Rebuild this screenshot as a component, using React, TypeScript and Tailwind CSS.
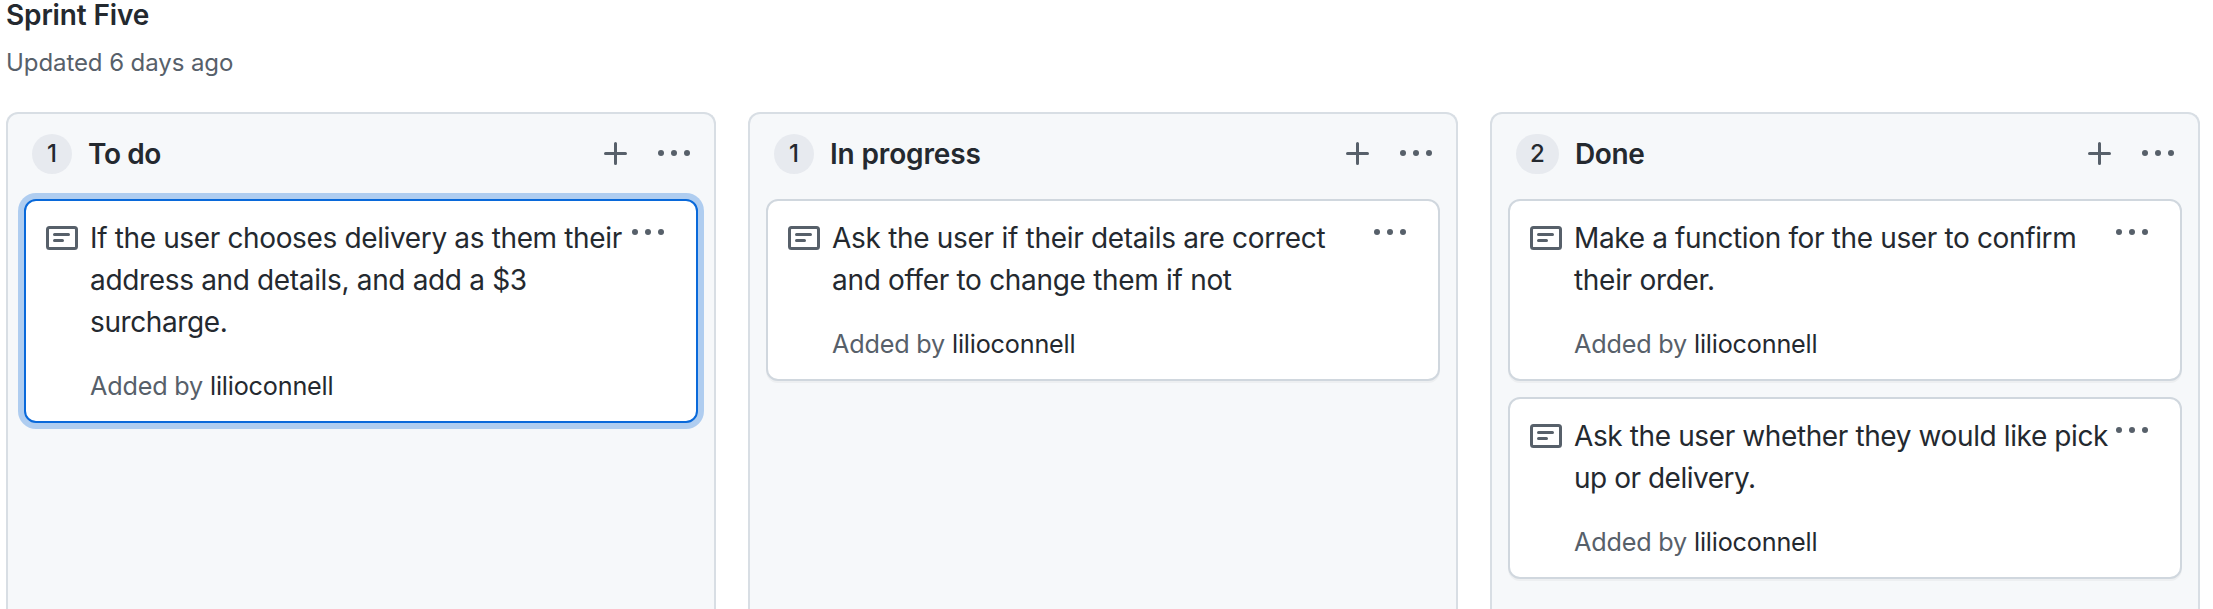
type CardData = { lines: { text: string; tracking: string }[]; selected?: boolean };
type ColumnData = { title: string; titleTracking: string; count: number; cards: CardData[] };

const columns: ColumnData[] = [
  {
    title: "To do",
    titleTracking: "tracking-[-0.4px]",
    count: 1,
    cards: [
      {
        selected: true,
        lines: [
          { text: "If the user chooses delivery as them their", tracking: "tracking-[-0.36px]" },
          { text: "address and details, and add a $3", tracking: "tracking-[-0.34px]" },
          { text: "surcharge.", tracking: "tracking-[-0.4px]" },
        ],
      },
    ],
  },
  {
    title: "In progress",
    titleTracking: "tracking-[-0.15px]",
    count: 1,
    cards: [
      {
        lines: [
          { text: "Ask the user if their details are correct", tracking: "tracking-[-0.3px]" },
          { text: "and offer to change them if not", tracking: "tracking-[-0.31px]" },
        ],
      },
    ],
  },
  {
    title: "Done",
    titleTracking: "tracking-[-0.4px]",
    count: 2,
    cards: [
      {
        lines: [
          { text: "Make a function for the user to confirm", tracking: "tracking-[-0.36px]" },
          { text: "their order.", tracking: "tracking-[-0.3px]" },
        ],
      },
      {
        lines: [
          { text: "Ask the user whether they would like pick", tracking: "tracking-[-0.39px]" },
          { text: "up or delivery.", tracking: "tracking-[-0.48px]" },
        ],
      },
    ],
  },
];

function Dots() {
  return (
    <svg width="32" height="6" viewBox="0 0 32 6" fill="#57606a" className="block shrink-0">
      <circle cx="3" cy="3" r="3" />
      <circle cx="16" cy="3" r="3" />
      <circle cx="29" cy="3" r="3" />
    </svg>
  );
}

function Plus() {
  return (
    <svg width="23" height="23" viewBox="0 0 23 23" stroke="#57606a" strokeWidth="3" strokeLinecap="round" className="block shrink-0">
      <path d="M11.5 1.5v20M1.5 11.5h20" />
    </svg>
  );
}

function NoteIcon() {
  return (
    <svg width="32" height="24" viewBox="0 0 32 24" fill="none" stroke="#57606a" strokeWidth="3" strokeLinecap="round" className="mt-[9px] block shrink-0">
      <rect x="1.5" y="1.5" width="29" height="21" rx="2" />
      <path d="M8.5 8.5h14M8.5 14.5h8" />
    </svg>
  );
}

function Card({ card }: { card: CardData }) {
  return (
    <article
      className={
        card.selected
          ? "flex rounded-[12px] border-2 border-[#0969da] bg-white pt-4 pr-8 pb-4 pl-5 shadow-[0_0_0_6px_rgba(9,105,218,0.3)]"
          : "flex rounded-[12px] border-2 border-[#d0d7de] bg-white pt-4 pr-8 pb-4 pl-5 shadow-[0_2px_0_rgba(27,31,36,0.04)]"
      }
    >
      <NoteIcon />
      <div className="ml-3 w-0 grow">
        {card.lines.map((l) => (
          <p key={l.text} className={"text-[28px] leading-[42px] whitespace-nowrap " + l.tracking}>
            {l.text}
          </p>
        ))}
        <p className="mt-6 text-[25.2px] leading-[38px] tracking-[-0.18px] whitespace-nowrap text-[#57606a]">
          Added by <span className="text-[#24292f]">lilioconnell</span>
        </p>
      </div>
      <div className="mt-3">
        <Dots />
      </div>
    </article>
  );
}

export default function App() {
  return (
    <main className="flex h-[609px] w-[2213px] flex-col overflow-hidden bg-white pl-[6px] font-[Inter,sans-serif] text-[#24292f]">
      <header className="h-[112px] shrink-0">
        <h1 className="text-[28px] leading-[30px] font-semibold tracking-[-0.15px]">Sprint Five</h1>
        <p className="mt-[15px] text-[24px] leading-[35px] tracking-[-0.08px] text-[#57606a]">Updated 6 days ago</p>
      </header>
      <div className="flex grow gap-8">
        {columns.map((c) => (
          <section key={c.title} className="w-[710px] shrink-0 rounded-t-[12px] border-2 border-b-0 border-[#d8dee4] bg-[#f6f8fa] px-4">
            <div className="flex h-[85px] items-start pt-5 pr-2 pl-2">
              <span
                className={
                  c.count === 1
                    ? "flex h-10 w-10 items-center justify-center rounded-full bg-[#e7eaef] text-[24px] leading-none font-medium"
                    : "flex h-10 w-[43px] items-center justify-center rounded-full bg-[#e7eaef] text-[24px] leading-none font-medium"
                }
              >
                {c.count}
              </span>
              <h2 className={"-mt-px ml-4 text-[28px] leading-[42px] font-semibold " + c.titleTracking}>{c.title}</h2>
              <div className="mt-2 ml-auto flex items-start gap-[31px]">
                <Plus />
                <div className="mt-2">
                  <Dots />
                </div>
              </div>
            </div>
            <div className="flex flex-col gap-4">
              {c.cards.map((card) => (
                <Card key={card.lines[0].text} card={card} />
              ))}
            </div>
          </section>
        ))}
      </div>
    </main>
  );
}
